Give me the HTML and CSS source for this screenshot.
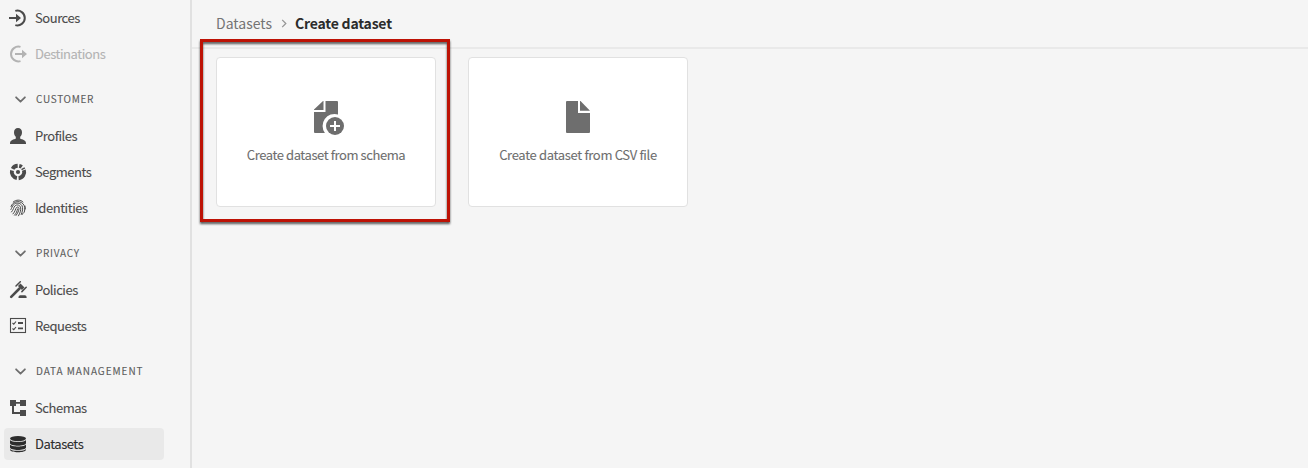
FILE: index.html
```html
<!DOCTYPE html>
<html lang="en">
<head>
<meta charset="utf-8">
<title>Create dataset</title>
<link rel="stylesheet" href="styles.css">
</head>
<body>
<div class="app">
  <nav class="sidebar">
    <a class="item"><svg class="icon" viewBox="0 0 18 18"><path d="M6.300 1.900A7.400 7.400 0 1 1 6.300 16.100" fill="none" stroke="currentColor" stroke-width="2"/><path d="M0 8h7V4.800L12 9l-5 4.200V10H0z"/></svg><span class="label">Sources</span></a>
    <a class="item disabled"><svg class="icon" viewBox="0 0 18 18"><path d="M11.500 1.900A7.400 7.400 0 1 0 11.500 16.100" fill="none" stroke="currentColor" stroke-width="2"/><path d="M6 8h7V4.800L18 9l-5 4.200V10H6z"/></svg><span class="label">Destinations</span></a>
    <h2 class="heading"><svg class="chevron" viewBox="0 0 10 6"><path d="M1 1l4 4 4-4"/></svg><span class="label">CUSTOMER</span></h2>
    <a class="item"><svg class="icon" viewBox="0 0 18 18"><path d="M9 1c2.500 0 4 1.700 4 4.200 0 2-.7 3.600-1.800 4.600v1.500c0 .4.300.6.7.7 2.800.7 5.100 1.700 5.100 4V17H1v-1c0-2.300 2.300-3.300 5.100-4 .4-.1.700-.3.700-.7V9.800C5.700 8.800 5 7.200 5 5.200 5 2.700 6.500 1 9 1z"/></svg><span class="label">Profiles</span></a>
    <a class="item"><svg class="icon" viewBox="0 0 18 18"><g fill="none" stroke="currentColor" stroke-width="3.900"><path d="M10.200 2.900A6.200 6.200 0 0 1 12.700 4M14.900 7.100A6.200 6.200 0 0 1 9.600 15.200M7.900 15.100A6.200 6.200 0 0 1 3 7.400M3.600 5.900A6.200 6.200 0 0 1 8.700 2.800"/></g><circle cx="9" cy="9" r="2.100"/><path d="M12.500 6.700l3.300-1.900" stroke="currentColor" stroke-width="1.500"/></svg><span class="label">Segments</span></a>
    <a class="item"><svg class="icon" viewBox="0 0 18 18"><g fill="none" stroke="currentColor" stroke-width="1" stroke-linecap="round"><path d="M4.200 3C7 .5 11.500.4 14 3M2 7.500C3.500 2.600 10 .8 14 4.800c2 2.100 2.200 5.100 1.300 8.400M1.900 10.500C3 8.700 3 7.500 4.500 5.800 7 3.100 11.300 3.700 13 6.700c1.300 2.400.5 5.700-.8 8.800M2.500 13c2.200-2.400 2-4.600 3.500-6.100 2-2 5.300-.7 5.700 2 .3 2.400-.7 5.100-2.200 7.900M4 14.900c2.600-2.700 2.200-5.100 3.500-6.400 1-1 2.500-.4 2.500 1-.1 2.200-1.200 4.700-3 7M5.500 16.200c1.900-2 2.500-3.800 3-6.200M13.400 15.400l.8-1.500M16 7l.3 3"/></g></svg><span class="label">Identities</span></a>
    <h2 class="heading"><svg class="chevron" viewBox="0 0 10 6"><path d="M1 1l4 4 4-4"/></svg><span class="label">PRIVACY</span></h2>
    <a class="item"><svg class="icon" viewBox="0 0 18 18"><g fill="none" stroke="currentColor"><path d="M2.200 15.800L10.500 7.500" stroke-width="2.600" stroke-linecap="round"/><path d="M10.200 3.800l4 4" stroke-width="3.600"/><path d="M7 5l4.300-4.300M12.900 10.600l4.300-4.300" stroke-width="1.500" stroke-linecap="round"/></g><path d="M9.500 17v-.8c0-1 .8-1.900 1.700-1.900h4.600c1 0 1.800.9 1.800 1.900v.8z"/></svg><span class="label">Policies</span></a>
    <a class="item"><svg class="icon" viewBox="0 0 18 18"><g fill="none" stroke="currentColor"><rect x="1.500" y="1.500" width="15" height="14" stroke-width="1.100"/><path d="M3.500 6l1.300 1.200L7 4.500M3.500 11.500l1.300 1.200L7 10" stroke-width="1.100"/><path d="M9 6h5M9 11.300h5" stroke-width="1.800"/></g></svg><span class="label">Requests</span></a>
    <h2 class="heading wide"><svg class="chevron" viewBox="0 0 10 6"><path d="M1 1l4 4 4-4"/></svg><span class="label">DATA MANAGEMENT</span></h2>
    <a class="item"><svg class="icon" viewBox="0 0 18 18"><path d="M1 1h6v2h4V1h6v6h-6V4.800H7V7H5v6h6v-2h6v6h-6v-2H3V7H1z"/></svg><span class="label">Schemas</span></a>
    <a class="item selected"><svg class="icon" viewBox="0 0 18 18"><ellipse cx="9" cy="3.600" rx="8" ry="2.700"/><path d="M1 5.100c1.600 2.600 14.400 2.600 16 0v3.100c0 3.300-16 3.300-16 0zM1 9.600c1.600 2.600 14.400 2.600 16 0v2.900c0 3.300-16 3.300-16 0zM1 13.900c1.600 2.600 14.400 2.600 16 0v.9c0 3.300-16 3.300-16 0z"/></svg><span class="label">Datasets</span></a>
  </nav>
  <main class="main">
    <header class="breadcrumbs">
      <a class="crumb">Datasets</a>
      <svg class="separator" viewBox="0 0 6 10"><path d="M1 1l4 4-4 4"/></svg>
      <h1 class="current">Create dataset</h1>
    </header>
    <section class="cards">
      <div class="card highlighted">
        <svg class="file-icon" viewBox="0 0 36 36"><path d="M6 11V10.500L15 2h.5v9zM17.500 2H29q1 0 1 1v12.400A12 12 0 0 0 16.900 34H7q-1 0-1-1V13h11.500z"/><circle cx="27" cy="27" r="9"/><path d="M27 22v10M22 27h10" stroke="#fff" stroke-width="2"/></svg>
        <span class="title">Create dataset from schema</span>
      </div>
      <div class="card">
        <svg class="file-icon" viewBox="0 0 36 36"><path d="M20 2v9.800h10L20.500 2z"/><path d="M7 2h11v12h12v19q0 1-1 1H7q-1 0-1-1V3q0-1 1-1z"/></svg>
        <span class="title csv">Create dataset from CSV file</span>
      </div>
    </section>
  </main>
</div>
</body>
</html>
```
FILE: styles.css
```css
* { box-sizing: border-box; }
body {
  margin: 0;
  background: #f5f5f5;
  color: #4b4b4b;
  font-family: "Noto Sans CJK SC", "Noto Sans", sans-serif;
  font-size: 13px;
  overflow: hidden;
}
.app { display: flex; height: 468px; }
.sidebar {
  width: 192px;
  flex: none;
  padding: 2px 26px 0 4px;
  border-right: 2px solid #e1e1e1;
}
.item {
  display: flex;
  align-items: center;
  gap: 8px;
  height: 32px;
  padding-left: 5px;
  border-radius: 4px;
  letter-spacing: -.46px;
  white-space: nowrap;
}
.item + .item { margin-top: 4px; }
.item.disabled { color: #b3b3b3; }
.item.selected { background: #e9e9e9; color: #2c2c2c; }
.label { padding-bottom: 2px; -webkit-text-stroke: .1px currentColor; }
.icon { width: 18px; height: 18px; flex: none; fill: currentColor; }
.heading {
  display: flex;
  align-items: center;
  gap: 10px;
  height: 50px;
  margin: 0;
  padding: 8px 0 0 11px;
  color: #5c5c5c;
  font-size: 10px;
  font-weight: 400;
  letter-spacing: .7px;
  white-space: nowrap;
}
.heading.wide { letter-spacing: .93px; }
.chevron {
  width: 11px;
  height: 7px;
  fill: none;
  stroke: #6e6e6e;
  stroke-width: 1.6;
  stroke-linecap: round;
  stroke-linejoin: round;
}
.main { flex: 1; }
.breadcrumbs {
  display: flex;
  align-items: center;
  height: 49px;
  padding: 0 0 2px 24px;
  border-bottom: 2px solid #e9e9e9;
  font-size: 14px;
}
.crumb { color: #747474; }
.separator {
  width: 6px;
  height: 9px;
  margin: 2px 8px 0 9px;
  fill: none;
  stroke: #959595;
  stroke-width: 1.4;
}
.current {
  margin: 0;
  color: #2c2c2c;
  font-size: 14px;
  font-weight: 700;
  letter-spacing: -.2px;
}
.cards { display: flex; gap: 32px; padding: 8px 24px; }
.card {
  position: relative;
  display: flex;
  flex-direction: column;
  align-items: center;
  gap: 11px;
  width: 220px;
  height: 150px;
  padding-top: 41px;
  border: 1px solid #e1e1e1;
  border-radius: 4px;
  background: #fff;
  color: #6e6e6e;
  line-height: 18px;
  white-space: nowrap;
}
.title { letter-spacing: -.42px; -webkit-text-stroke: .1px currentColor; }
.title.csv { letter-spacing: -.33px; }
.file-icon { width: 36px; height: 36px; fill: #6e6e6e; }
.highlighted::after {
  content: "";
  position: absolute;
  inset: -19px -15px -16px -17px;
  border: 3px solid #bd1205;
  filter: drop-shadow(0 2px 1px rgba(0, 0, 0, .65));
}
```
